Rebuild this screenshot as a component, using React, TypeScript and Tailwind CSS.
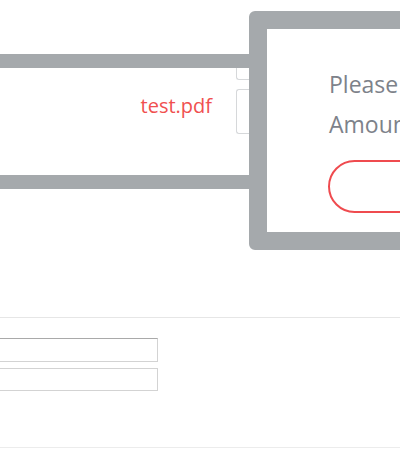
import React from "react";

export default function App() {
  return (
    <div
      className="relative w-[400px] h-[449px] overflow-hidden bg-white"
      style={{ fontFamily: '"Open Sans", "Noto Sans", sans-serif' }}
    >
      <div className="flex items-start h-[317px]">
        <div className="mt-[54px] w-[249px] shrink-0 h-[135px] border-y-[14px] border-[#a5a9ac] bg-white flex items-start justify-end">
          <span className="mt-[24px] mr-[24px] text-[20px] leading-[28px] text-[#f0504f] whitespace-nowrap">
            test.pdf
          </span>
          <div className="flex flex-col w-[13px]">
            <div className="h-[12px] border-l border-b border-[#d6d8da] rounded-bl-[3px]" />
            <div className="mt-[9px] h-[45px] border-l border-y border-[#d6d8da] rounded-l-[3px]" />
          </div>
        </div>
        <div className="mt-[11px] w-[320px] h-[239px] shrink-0 border-[18px] border-[#a5a9ac] rounded-[6px] bg-white pl-[62px] pt-[35px]">
          <p className="text-[23px] leading-[40px] text-[#7d828a] whitespace-nowrap">Please enter the amount</p>
          <p className="text-[23px] leading-[40px] text-[#7d828a] whitespace-nowrap">Amount</p>
          <div className="mt-[16px] -ml-[1px] h-[53px] w-[300px] border-2 border-[#ef4b4f] rounded-full" />
        </div>
      </div>
      <div className="border-t border-[#e6e6e6]" />
      <div className="mt-[20px] flex flex-col gap-[6px]">
        <div className="w-[158px] h-[24px] border border-l-0 border-[#d3d3d3] border-t-[#a9a9a9]" />
        <div className="w-[158px] h-[23px] border border-l-0 border-[#d3d3d3]" />
      </div>
      <div className="mt-[56px] border-t border-[#ececec]" />
    </div>
  );
}
